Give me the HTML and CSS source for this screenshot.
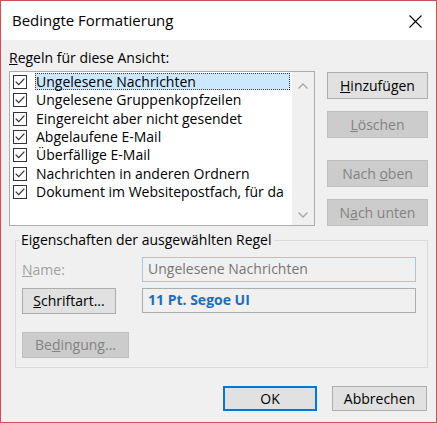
FILE: index.html
```html
<!DOCTYPE html>
<html lang="de">
<head>
<meta charset="utf-8">
<title>Bedingte Formatierung</title>
<link rel="stylesheet" href="styles.css">
</head>
<body>
<div class="window">
  <div class="titlebar">
    <span class="title">Bedingte Formatierung</span>
    <svg class="close" width="13" height="13" viewBox="0 0 13 13"><path d="M0.5 0.5L12.5 12.5M12.5 0.5L0.5 12.5" stroke="#000" stroke-width="1.1" fill="none"/></svg>
  </div>
  <div class="content">
    <div class="rules">
      <div class="rules-label"><u>R</u>egeln für diese Ansicht:</div>
      <div class="listbox">
        <ul class="items">
          <li class="item selected"><svg class="check" width="14" height="14" viewBox="0 0 14 14"><rect x="0.5" y="0.5" width="13" height="13" fill="#fff" stroke="#333"/><path d="M2.7 6.6L5.7 9.6L11.4 3.6" fill="none" stroke="#333" stroke-width="1.3"/></svg><span class="text">Ungelesene Nachrichten</span></li>
          <li class="item"><svg class="check" width="14" height="14" viewBox="0 0 14 14"><rect x="0.5" y="0.5" width="13" height="13" fill="#fff" stroke="#333"/><path d="M2.7 6.6L5.7 9.6L11.4 3.6" fill="none" stroke="#333" stroke-width="1.3"/></svg><span class="text">Ungelesene Gruppenkopfzeilen</span></li>
          <li class="item"><svg class="check" width="14" height="14" viewBox="0 0 14 14"><rect x="0.5" y="0.5" width="13" height="13" fill="#fff" stroke="#333"/><path d="M2.7 6.6L5.7 9.6L11.4 3.6" fill="none" stroke="#333" stroke-width="1.3"/></svg><span class="text">Eingereicht aber nicht gesendet</span></li>
          <li class="item"><svg class="check" width="14" height="14" viewBox="0 0 14 14"><rect x="0.5" y="0.5" width="13" height="13" fill="#fff" stroke="#333"/><path d="M2.7 6.6L5.7 9.6L11.4 3.6" fill="none" stroke="#333" stroke-width="1.3"/></svg><span class="text">Abgelaufene E-Mail</span></li>
          <li class="item"><svg class="check" width="14" height="14" viewBox="0 0 14 14"><rect x="0.5" y="0.5" width="13" height="13" fill="#fff" stroke="#333"/><path d="M2.7 6.6L5.7 9.6L11.4 3.6" fill="none" stroke="#333" stroke-width="1.3"/></svg><span class="text">Überfällige E-Mail</span></li>
          <li class="item"><svg class="check" width="14" height="14" viewBox="0 0 14 14"><rect x="0.5" y="0.5" width="13" height="13" fill="#fff" stroke="#333"/><path d="M2.7 6.6L5.7 9.6L11.4 3.6" fill="none" stroke="#333" stroke-width="1.3"/></svg><span class="text">Nachrichten in anderen Ordnern</span></li>
          <li class="item"><svg class="check" width="14" height="14" viewBox="0 0 14 14"><rect x="0.5" y="0.5" width="13" height="13" fill="#fff" stroke="#333"/><path d="M2.7 6.6L5.7 9.6L11.4 3.6" fill="none" stroke="#333" stroke-width="1.3"/></svg><span class="text">Dokument im Websitepostfach, für da</span></li>
        </ul>
        <div class="scrollbar">
          <div class="arrow up"><svg width="10" height="6" viewBox="0 0 10 6"><path d="M0.5 5.5L5 1L9.5 5.5" fill="none" stroke="#a6a6a6" stroke-width="1.3"/></svg></div>
          <div class="arrow down"><svg width="10" height="6" viewBox="0 0 10 6"><path d="M0.5 0.5L5 5L9.5 0.5" fill="none" stroke="#a6a6a6" stroke-width="1.3"/></svg></div>
        </div>
      </div>
      <div class="side-buttons">
        <button class="btn"><u>H</u>inzufügen</button>
        <button class="btn disabled"><u>L</u>öschen</button>
        <button class="btn disabled move-up">Nach <u>o</u>ben</button>
        <button class="btn disabled">N<u>a</u>ch unten</button>
      </div>
    </div>
    <fieldset class="props">
      <legend>Eigenschaften der ausgewählten Regel</legend>
      <div class="props-grid">
        <span class="field-label disabled-text"><u>N</u>ame:</span>
        <div class="textbox name-box">Ungelesene Nachrichten</div>
        <button class="btn font-btn"><u>S</u>chriftart...</button>
        <div class="textbox font-box">11 Pt. Segoe UI</div>
        <button class="btn disabled cond-btn">Be<u>d</u>ingung...</button>
      </div>
    </fieldset>
    <div class="footer">
      <button class="btn default ok">OK</button>
      <button class="btn cancel">Abbrechen</button>
    </div>
  </div>
</div>
</body>
</html>
```
FILE: styles.css
```css
* { box-sizing: border-box; }
html, body { margin: 0; padding: 0; }
body {
  width: 437px;
  height: 423px;
  font-family: "Open Sans", "Noto Sans", sans-serif;
  font-size: 14px;
  color: #000;
  background: #f0f0f0;
}
.window {
  width: 437px;
  height: 423px;
  border: 1px solid #c95353;
  background: #f0f0f0;
  display: flex;
  flex-direction: column;
}
.titlebar {
  height: 39px;
  background: #fff;
  display: flex;
  align-items: center;
  justify-content: space-between;
  padding: 0 14px 0 11px;
  flex: none;
}
.title {
  font-size: 15px;
  line-height: 20px;
  margin-top: -1px;
}
.close { display: block; margin-top: 1px; }
.content {
  padding: 9px 8px 0 8px;
  flex: 1;
  display: flex;
  flex-direction: column;
}
.rules {
  display: grid;
  grid-template-columns: 306px 101px;
  column-gap: 12px;
}
.rules-label {
  grid-column: 1 / 3;
  line-height: 18px;
  margin-bottom: 4px;
}
.listbox {
  height: 155px;
  border: 1px solid #adadad;
  background: #fff;
  display: flex;
}
.items {
  list-style: none;
  margin: 0;
  padding: 1px 0 0 0;
  flex: 1;
  min-width: 0;
  overflow: hidden;
}
.item {
  height: 18.33px;
  display: flex;
  align-items: flex-start;
  padding-left: 3px;
  white-space: nowrap;
}
.check {
  flex: none;
  margin-top: 2px;
  margin-right: 8px;
  display: block;
}
.text {
  flex: 1;
  min-width: 0;
  height: 17px;
  line-height: 15px;
  border: 1px dotted transparent;
  margin-right: 2px;
}
.selected .text {
  background: #cce8ff;
  border-color: #3c3c3c;
}
.scrollbar {
  width: 22px;
  flex: none;
  background: #f0f0f0;
  display: flex;
  flex-direction: column;
  justify-content: space-between;
}
.arrow {
  display: flex;
  justify-content: center;
  align-items: center;
}
.arrow.up { height: 27px; padding-top: 1px; }
.arrow.down { height: 22px; padding-top: 1px; }
.arrow svg { display: block; }
.side-buttons {
  display: flex;
  flex-direction: column;
  gap: 12px;
  padding-top: 1px;
}
.btn {
  font-family: inherit;
  font-size: 14px;
  color: #000;
  background: #e1e1e1;
  border: 1px solid #adadad;
  border-radius: 0;
  height: 27px;
  padding: 0;
  line-height: 18px;
  margin: 0;
}
.btn.disabled {
  background: #cccccc;
  border-color: #bfbfbf;
  color: #838383;
}
.side-buttons .move-up { margin-top: 10px; }
.props {
  margin: 5px 0 0 6px;
  padding: 8px 10px 9px 6px;
  border: 1px solid #dcdcdc;
  min-width: 0;
}
.props legend {
  padding: 0 2px;
  margin-left: -3px;
  line-height: 18px;
}
.props-grid {
  display: grid;
  grid-template-columns: 120px 274px;
  grid-template-rows: 25px 26px auto;
  row-gap: 6px;
  align-items: center;
}
.field-label { line-height: 18px; }
.disabled-text { color: #a0a0a0; }
.textbox {
  height: 100%;
  border: 1px solid #adadad;
  background: #f0f0f0;
  padding-left: 5px;
  line-height: 22px;
  white-space: nowrap;
}
.name-box {
  border-color: #a7c6e4;
  color: #767676;
}
.font-box {
  height: 25px;
  align-self: start;
  color: #1a6ebf;
  font-weight: bold;
}
.font-btn { width: 94px; height: 26px; }
.cond-btn { width: 107px; height: 26px; margin-top: 12px; }
.footer {
  display: flex;
  justify-content: flex-end;
  gap: 15px;
  margin-top: 18px;
  padding-right: 1px;
}
.footer .btn { height: 25px; }
.ok { width: 94px; }
.cancel { width: 95px; }
.btn.default {
  border: 2px solid #0078d7;
}
```
